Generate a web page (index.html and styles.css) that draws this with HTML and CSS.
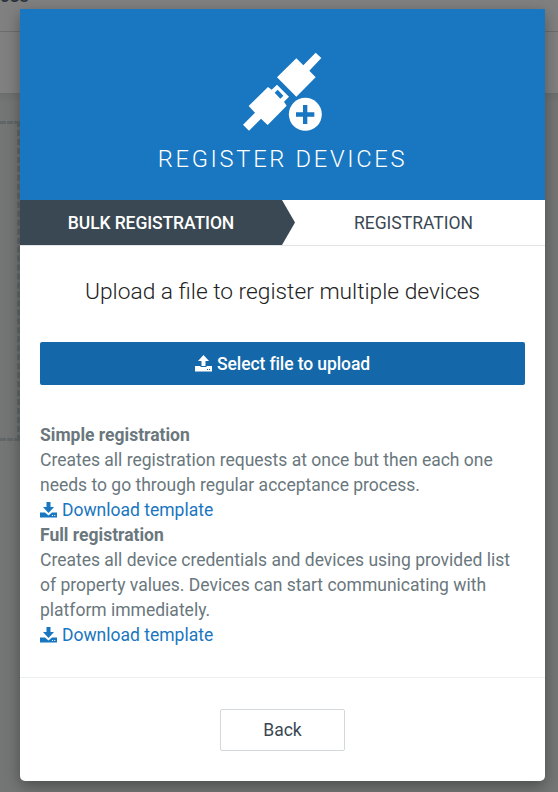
FILE: index.html
```html
<!DOCTYPE html>
<html lang="en">
<head>
<meta charset="utf-8">
<title>Register devices</title>
<link rel="stylesheet" href="styles.css">
</head>
<body>
<div class="backdrop">
  <div class="topbar"><span>ices</span></div>
  <div class="subbar"></div>
  <div class="content"><div class="dropzone"></div></div>
</div>
<main class="modal">
  <header class="modal-header">
    <svg class="plug" viewBox="0 0 330 300" width="110" height="100">
      <path fill="#fff" d="M257 38l17 16-36 38 19 20-58 58-58-58 58-57 21 21z"/>
      <path fill="#fff" fill-rule="evenodd" d="M114 141l11 8 16-15 36 36-15 15 8 12-57 58-20-19-36 36-18-18 36-36-19-20zM143 149l-9 9 17 18 9-9z"/>
      <circle cx="226" cy="223" r="49.500" fill="#fff"/>
      <path fill="#1976c0" d="M219 195h13v22h21v13h-21v22h-13v-22h-21v-13h21z"/>
    </svg>
    <h1>REGISTER DEVICES</h1>
  </header>
  <nav class="steps">
    <div class="step active"><span>BULK REGISTRATION</span></div>
    <div class="step next"><span>REGISTRATION</span></div>
  </nav>
  <section class="body">
    <h2><span>Upload a file to register multiple devices</span></h2>
    <button class="upload">
      <svg viewBox="0 0 17 17" width="17" height="17"><path fill="currentColor" fill-rule="evenodd" d="M8.500 0L14 6h-3.500v5h-4V6H3zM0 11h5.500v1h6v-1H17V16.500H0zM12 14v1h1v-1zM14 14v1h1v-1z"/></svg>
      <span>Select file to upload</span>
    </button>
    <div class="info">
      <strong>Simple registration</strong>
      <p>Creates all registration requests at once but then each one<br>needs to go through regular acceptance process.</p>
      <a><svg viewBox="0 0 17 17" width="17" height="17"><path fill="currentColor" fill-rule="evenodd" d="M6.500 0h4v5H14l-5.500 6L3 5h3.500zM0 10.500h5l3.500 3 3.500-3h5V15.500H0zM12 13v1h1V13zM14.300 13v1h1V13z"/></svg><span>Download template</span></a>
      <strong>Full registration</strong>
      <p>Creates all device credentials and devices using provided list<br>of property values. Devices can start communicating with<br>platform immediately.</p>
      <a><svg viewBox="0 0 17 17" width="17" height="17"><path fill="currentColor" fill-rule="evenodd" d="M6.500 0h4v5H14l-5.500 6L3 5h3.500zM0 10.500h5l3.500 3 3.500-3h5V15.500H0zM12 13v1h1V13zM14.300 13v1h1V13z"/></svg><span>Download template</span></a>
    </div>
  </section>
  <footer class="modal-footer"><button class="back">Back</button></footer>
</main>
</body>
</html>
```

FILE: styles.css
```css
* { box-sizing: border-box; }
body {
  margin: 0;
  height: 792px;
  overflow: hidden;
  position: relative;
  padding: 9px 13px 11px 20px;
  background: #737675;
  font: 17.5px/25px Roboto, "Liberation Sans", sans-serif;
  color: #3a4853;
}
.backdrop { position: absolute; inset: 0; }
.topbar { height: 32px; background: #808080; border-bottom: 1px solid #6d6d6d; overflow: hidden; }
.topbar span { display: block; margin: -16px 0 0 -5px; font-size: 18.5px; font-weight: 500; color: #2a333b; }
.subbar { height: 61px; background: #808080; }
.content { height: 699px; padding-top: 28px; background: linear-gradient(#6c6f6e, #737675 10px); }
.dropzone { width: 20px; height: 320px; border: 3px dashed #616769; border-left: 0; }
.modal {
  position: relative;
  height: 772px;
  display: flex;
  flex-direction: column;
  background: #fff;
  border-radius: 0 0 5px 5px;
  box-shadow: 0 5px 15px rgba(0, 0, 0, .35);
}
.modal-header {
  height: 191px;
  padding-top: 31px;
  background: #1976c0;
  color: #fff;
  display: flex;
  flex-direction: column;
  align-items: center;
}
.plug { flex: none; margin-left: 5px; }
h1 { margin: 4px 0 0; font-size: 23.7px; line-height: 30px; font-weight: 300; letter-spacing: 2.7px; }
.steps { height: 46px; display: flex; border-bottom: 1px solid #e2e4e5; }
.step { flex: 1; display: flex; align-items: center; justify-content: center; padding-top: 1px; }
.step.next { padding-right: 13px; }
.step.active {
  flex: 0 0 275px;
  padding-right: 13px;
  background: #3a4853;
  color: #fff;
  font-weight: 500;
  letter-spacing: -.1px;
  clip-path: polygon(0 0, 262px 0, 275px 50%, 262px 100%, 0 100%);
}
.body { padding: 32px 20px 0; height: 431px; }
h2 { margin: 0; font-size: 22.75px; line-height: 28px; font-weight: 300; text-align: center; color: #222; }
button { font: inherit; }
.upload {
  width: 100%;
  height: 43px;
  margin-top: 36px;
  padding: 0;
  border: 0;
  border-radius: 2px;
  background: #1467a8;
  color: #fff;
  font-weight: 500;
  letter-spacing: -.1px;
  display: flex;
  align-items: center;
  justify-content: center;
  gap: 5px;
}
.upload span { padding-top: 1px; }
.info { margin-top: 38px; color: #6a777d; }
.info strong, .info a { display: block; height: 25px; }
.info p { margin: 0; white-space: nowrap; }
.info a { color: #1976c0; display: flex; gap: 5px; align-items: center; }
.info svg { margin-top: -1px; }
.modal-footer { border-top: 1px solid #edeeef; padding-top: 31px; text-align: center; }
.back {
  width: 125px;
  height: 42px;
  padding: 0;
  background: #fff;
  border: 1px solid #d3d8dc;
  border-radius: 2px;
  color: #3a4853;
}
```
